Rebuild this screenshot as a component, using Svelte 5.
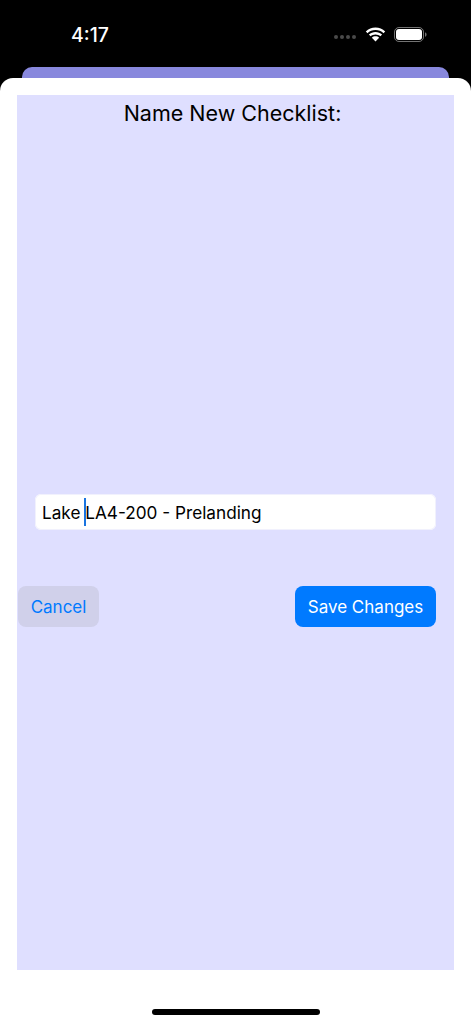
<script>
  const title = 'Name New Checklist:';
</script>

<div class="page">
  <header class="status">
    <span class="time">4:17</span>
    <div class="indicators">
      <span class="dots"><i></i><i></i><i></i><i></i></span>
      <svg class="wifi" width="21" height="15" viewBox="0 0 21 15" aria-hidden="true">
        <path d="M10.5 3C13.6 3 16.4 4.2 18.5 6.2L20.2 4.4C17.6 1.9 14.2.4 10.5.4S3.4 1.9.8 4.4L2.5 6.2C4.600 4.2 7.400 3 10.5 3Z" fill="#fff"/>
        <path d="M10.500 7.400C12.400 7.400 14.100 8.100 15.400 9.300L17.100 7.500C15.300 5.900 13 4.900 10.500 4.900S5.700 5.900 3.900 7.500L5.600 9.300C6.900 8.100 8.600 7.400 10.500 7.400Z" fill="#fff"/>
        <path d="M10.500 9.300C9.100 9.300 7.800 9.800 6.900 10.700L10.500 14.500L14.100 10.700C13.200 9.800 11.900 9.300 10.500 9.300Z" fill="#fff"/>
      </svg>
      <svg class="battery" width="33" height="15" viewBox="0 0 33 15" aria-hidden="true">
        <rect x=".5" y=".5" width="29" height="14" rx="4.500" fill="none" stroke="#fff" stroke-opacity=".45"/>
        <rect x="2" y="2" width="26" height="11" rx="3" fill="#fff"/>
        <path d="M31 5.200V9.800C32 9.400 32.600 8.500 32.600 7.500S32 5.600 31 5.200Z" fill="#fff" fill-opacity=".45"/>
      </svg>
    </div>
  </header>

  <div class="peek"></div>

  <main class="sheet">
    <section class="panel">
      <h1>{title}</h1>
      <div class="field">
        <span>Lake&nbsp;</span><span class="caret"></span><span>LA4-200 - Prelanding</span>
      </div>
      <div class="actions">
        <button class="cancel" type="button">Cancel</button>
        <button class="save" type="button">Save Changes</button>
      </div>
    </section>
    <div class="home-row"><div class="home"></div></div>
  </main>
</div>

<style>
  :global(body) {
    margin: 0;
    background: #000;
  }

  .page {
    display: flex;
    flex-direction: column;
    width: 471px;
    height: 1024px;
    overflow: hidden;
    background: #000;
    font-family: Inter, "Liberation Sans", sans-serif;
  }

  .status {
    display: flex;
    flex: none;
    align-items: center;
    justify-content: space-between;
    box-sizing: border-box;
    height: 67px;
    padding: 0 44px 0 71px;
    color: #fff;
  }

  .time {
    font-size: 19.500px;
    font-weight: 500;
    line-height: 23px;
    margin-top: 3px;
  }

  .indicators {
    display: flex;
    align-items: center;
    gap: 5px;
    margin-top: 1px;
  }

  .dots {
    display: flex;
    gap: 2px;
    margin-top: 6px;
    margin-right: 4px;
  }

  .dots i {
    width: 4px;
    height: 4px;
    border-radius: 50%;
    background: #4a4a4a;
  }

  .battery {
    margin-left: 3px;
  }

  .peek {
    flex: none;
    height: 11px;
    margin: 0 22px;
    border-radius: 10px 10px 0 0;
    background: #8888dd;
  }

  .sheet {
    display: flex;
    flex: 1;
    flex-direction: column;
    box-sizing: border-box;
    padding: 17px 17px 0;
    border-radius: 13px 13px 0 0;
    background: #fff;
  }

  .panel {
    display: flex;
    flex: none;
    flex-direction: column;
    box-sizing: border-box;
    height: 875px;
    background: #dfdfff;
  }

  h1 {
    margin: 0;
    padding-right: 6px;
    color: #000;
    font-size: 21.500px;
    font-weight: 400;
    line-height: 36px;
    text-align: center;
  }

  .field {
    display: flex;
    align-items: center;
    box-sizing: border-box;
    height: 36px;
    margin: 363px 18px 0;
    padding-left: 7px;
    border-radius: 6px;
    background: #fff;
    box-shadow: 0 0 0 1px #f1f1fd inset;
    color: #000;
    font-size: 17.200px;
    white-space: pre;
  }

  .caret {
    flex: none;
    width: 2px;
    height: 28px;
    margin: 0 -1px 0 -1px;
    background: #1a74e0;
  }

  .actions {
    display: flex;
    justify-content: space-between;
    margin: 56px 18px 0 1px;
  }

  button {
    height: 41px;
    padding: 0;
    border: 0;
    border-radius: 8px;
    font-family: inherit;
    font-size: 17px;
    font-weight: 400;
  }

  .cancel {
    width: 81px;
    background: #d0d0ea;
    color: #007aff;
  }

  .save {
    width: 141px;
    background: #007aff;
    color: #fff;
  }

  .home-row {
    display: flex;
    justify-content: center;
    padding-top: 39px;
  }

  .home {
    width: 168px;
    height: 6px;
    border-radius: 3px;
    background: #000;
  }
</style>
